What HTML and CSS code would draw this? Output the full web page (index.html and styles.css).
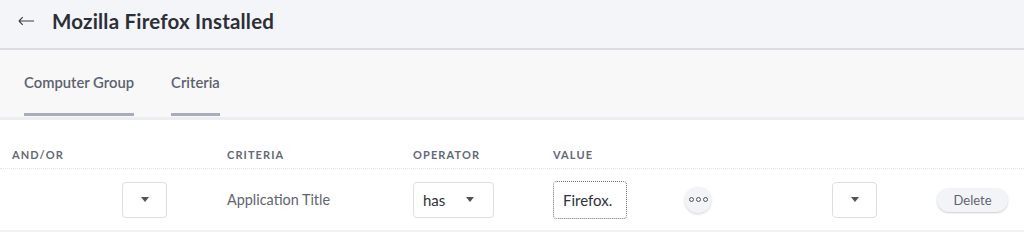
FILE: index.html
```html
<!DOCTYPE html>
<html lang="en">
<head>
    <meta charset="UTF-8">
    <meta name="viewport" content="width=device-width, initial-scale=1.0">
    <title>Mozilla Firefox Installed</title>
    <link rel="stylesheet" href="styles.css">
</head>
<body>

    <header class="page-header">
        <svg class="back-icon" viewBox="0 0 18 10">
            <path d="M1 5h16M1 5l4-4M1 5l4 4"></path>
        </svg>
        <h1 class="page-title">Mozilla Firefox Installed</h1>
    </header>

    <nav class="tabs">
        <div class="tab">Computer Group</div>
        <div class="tab">Criteria</div>
    </nav>

    <div class="criteria-table">
        <div class="table-head">
            <div class="col-andor">AND/OR</div>
            <div>CRITERIA</div>
            <div>OPERATOR</div>
            <div>VALUE</div>
            <div></div>
            <div></div>
            <div></div>
        </div>

        <div class="table-row">
            <div class="col-andor">
                <div class="select select-small"><span class="caret"></span></div>
            </div>
            <div class="criteria-name">Application Title</div>
            <div>
                <div class="select select-operator">has <span class="caret"></span></div>
            </div>
            <div>
                <div class="value-input">Firefox.</div>
            </div>
            <div>
                <button class="more-button"><span></span><span></span><span></span></button>
            </div>
            <div>
                <div class="select select-small"><span class="caret"></span></div>
            </div>
            <div>
                <button class="delete-button">Delete</button>
            </div>
        </div>
    </div>

</body>
</html>
```

FILE: styles.css
```css
body, html {
    margin: 0;
    padding: 0;
    background-color: #ffffff;
    font-family: Lato, "Open Sans", Arial, sans-serif;
    color: #2f323a;
}

/* top bar with the back arrow */
.page-header {
    display: flex;
    align-items: center;
    height: 50px;
    padding-left: 18px;
    background-color: #f4f5f9;
    border-bottom: 2px solid #dcdde3;
    box-sizing: border-box;
}

.back-icon {
    width: 17px;
    height: 10px;
    fill: none;
    stroke: #3a3d45;
    stroke-width: 1.2;
    margin-right: 17px;
    margin-top: -7px;
}

.page-title {
    margin: 0;
    margin-top: -7px;
    font-size: 20.5px;
    font-weight: 700;
    color: #2c2f36;
    letter-spacing: 0.2px;
}

/* tab strip */
.tabs {
    display: flex;
    gap: 37px;
    height: 67px;
    padding-left: 24px;
    background-color: #f8f8f9;
    border-bottom: 3px solid #eceef1;
}

.tab {
    display: flex;
    align-items: center;
    height: 66px;
    padding-top: 1px;
    font-size: 14.8px;
    font-weight: 600;
    color: #5c6170;
    border-bottom: 3px solid #a9adb9;
    box-sizing: border-box;
}

/* criteria table */
.criteria-table {
    padding-top: 17px;
}

.table-head,
.table-row {
    display: grid;
    grid-template-columns: 215px 186px 140px 132px 147px 104px 1fr;
    padding-left: 12px;
    align-items: center;
}

.table-head {
    height: 32px;
    padding-top: 4px;
    box-sizing: border-box;
    font-size: 11px;
    font-weight: 700;
    letter-spacing: 1.1px;
    color: #636876;
    border-bottom: 1px dotted #e3e4e8;
}

.table-row {
    height: 61px;
    border-bottom: 2px solid #f1f2f5;
}

.table-row .col-andor {
    padding-left: 110px;
}

.criteria-name {
    font-size: 14.4px;
    color: #5f6471;
}

.select {
    display: flex;
    align-items: center;
    justify-content: center;
    height: 36px;
    border: 1px solid #dcdee3;
    border-radius: 4px;
    box-sizing: border-box;
    font-size: 15px;
    color: #2f323a;
}

.select-small {
    width: 45px;
}

.select-operator {
    width: 81px;
    justify-content: space-between;
    padding: 0 19px 0 9px;
}

.caret {
    width: 0;
    height: 0;
    border-left: 4px solid transparent;
    border-right: 4px solid transparent;
    border-top: 5px solid #4f535d;
}

.value-input {
    display: flex;
    align-items: center;
    width: 74px;
    height: 38px;
    padding-left: 9px;
    border: 1px dotted #6f737d;
    border-radius: 4px;
    box-sizing: border-box;
    font-size: 15px;
    color: #2f323a;
}

.more-button {
    display: flex;
    align-items: center;
    justify-content: center;
    gap: 2px;
    width: 26px;
    height: 26px;
    padding: 0;
    border: none;
    border-radius: 50%;
    background-color: #f3f4f7;
    box-shadow: 0 1px 3px rgba(0, 0, 0, 0.18);
}

.more-button span {
    width: 3px;
    height: 3px;
    border: 1px solid #4f535d;
    border-radius: 50%;
}

.delete-button {
    width: 71px;
    height: 24px;
    padding: 0;
    margin-left: 1px;
    border: none;
    border-radius: 12px;
    background-color: #f3f4f7;
    box-shadow: 0 1px 2px rgba(0, 0, 0, 0.2);
    font-family: Lato, "Open Sans", Arial, sans-serif;
    font-size: 13px;
    color: #5f6471;
}
```
